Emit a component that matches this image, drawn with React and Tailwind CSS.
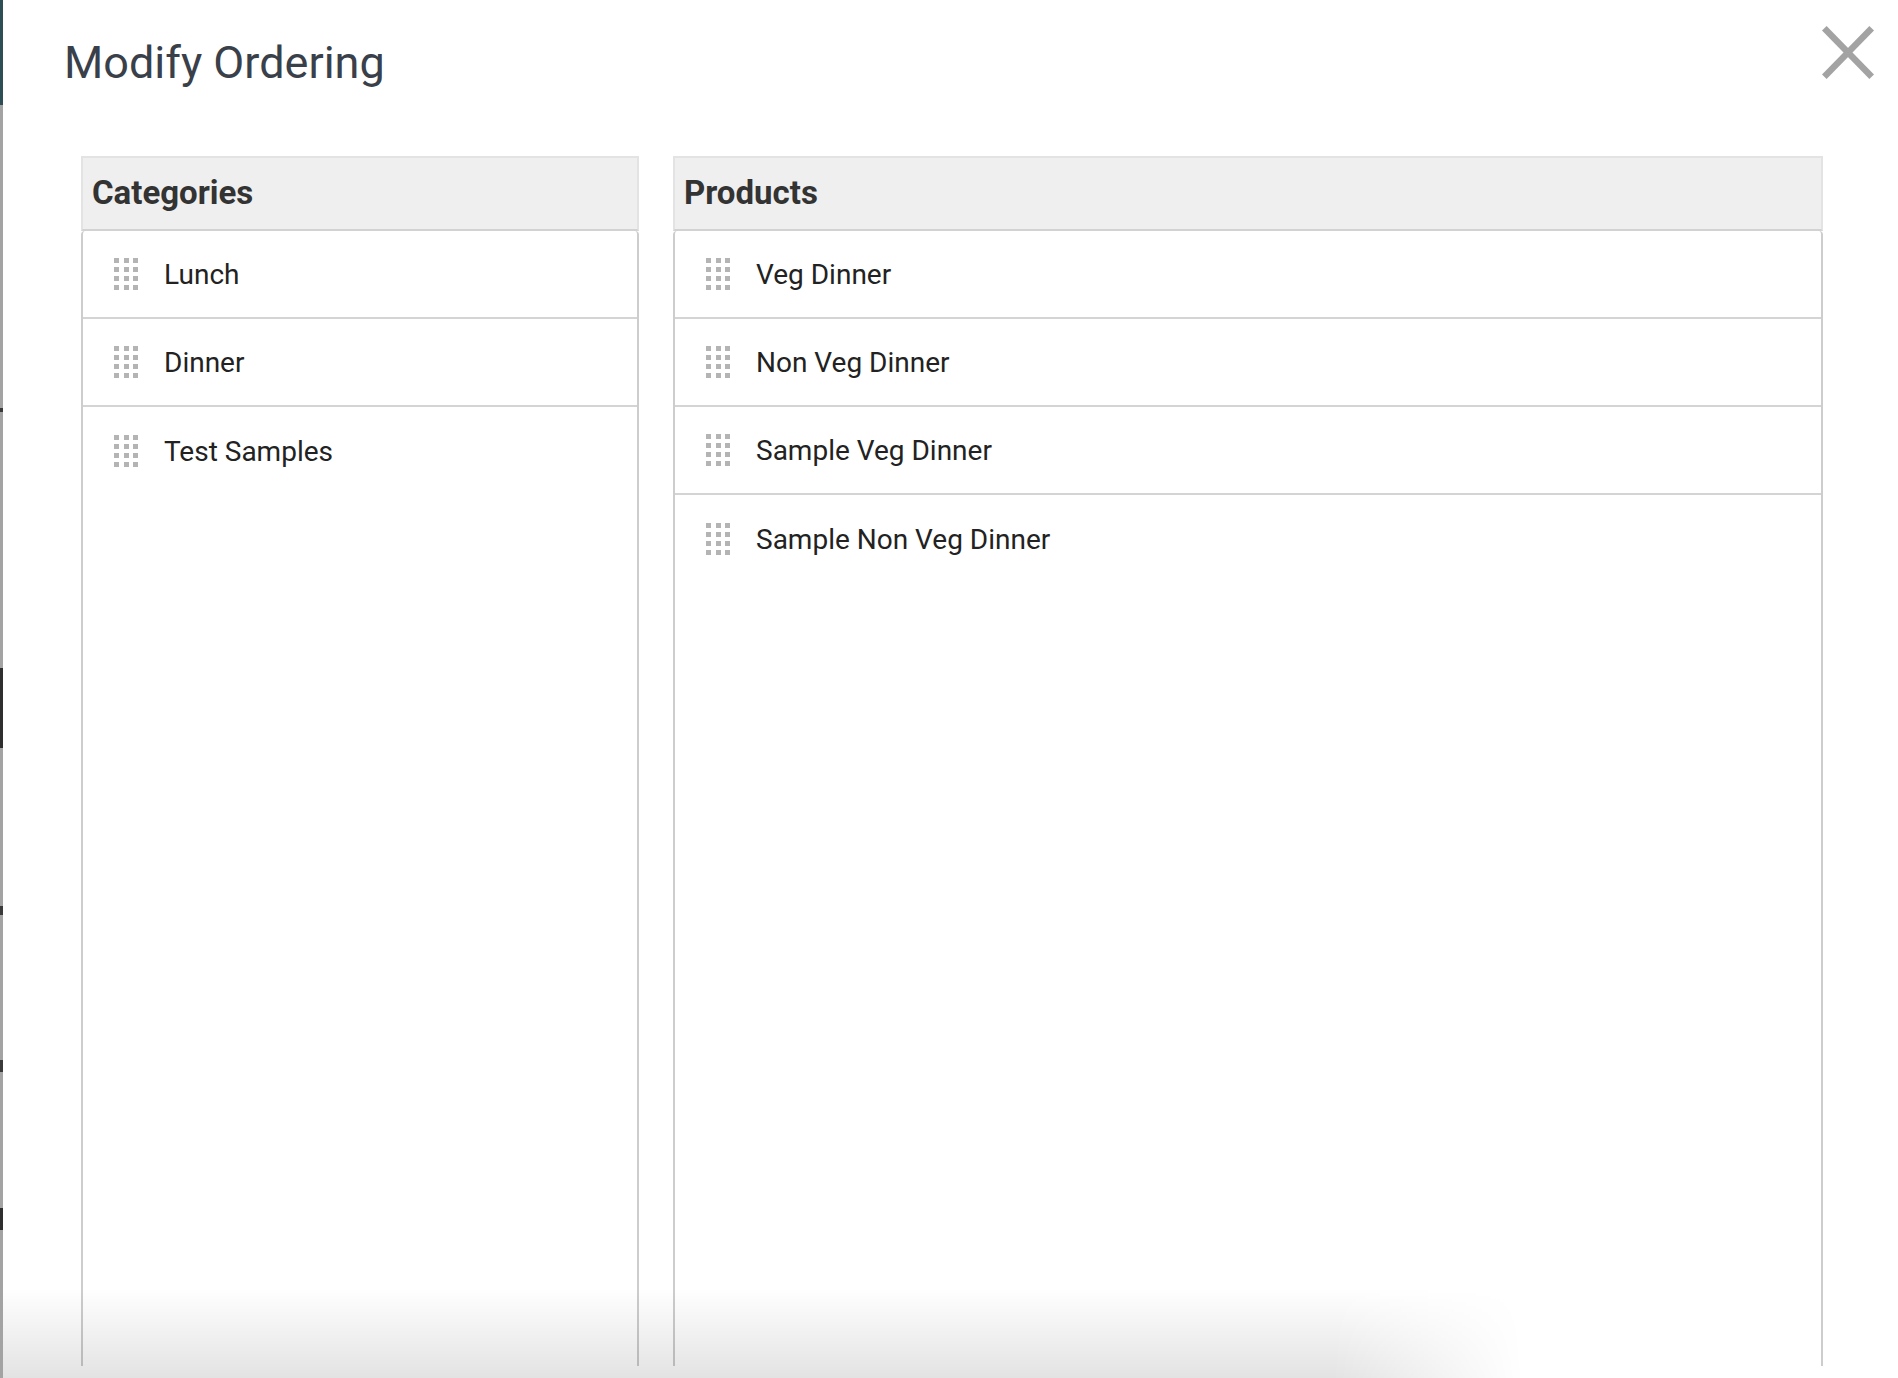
import React from "react";

function Handle() {
  return (
    <div className="grid grid-cols-3 gap-x-[4.5px] gap-y-[4px] w-[24px] shrink-0">
      {Array.from({ length: 12 }).map((_, i) => (
        <div key={i} className="w-[5px] h-[5px] bg-[#b4b4b4]" />
      ))}
    </div>
  );
}

function Panel({ title, items, className }) {
  return (
    <div className={"flex flex-col " + className}>
      <div className="h-[75px] shrink-0 border-2 border-[#e3e3e3] border-b-[#d2d2d2] bg-[#efefef] pl-[9px] pt-[18px]">
        <span className="text-[33px] leading-none font-bold text-[#333333]">{title}</span>
      </div>
      <div className="flex-1 border-x-2 border-[#cdcdcd] rounded-t-[4px]">
        {items.map((it, i) => (
          <div
            key={it}
            className={
              "h-[88px] flex items-center pl-[31px] " +
              (i < items.length - 1 ? "border-b-2 border-[#d4d4d4]" : "")
            }
          >
            <Handle />
            <span className="ml-[26px] mt-[2px] text-[28px] leading-none text-[#222222]">{it}</span>
          </div>
        ))}
      </div>
    </div>
  );
}

export default function App() {
  return (
    <div className="flex w-[1898px] h-[1378px] overflow-hidden bg-white font-['Roboto',sans-serif]">
      <div className="w-[3px] flex flex-col shrink-0">
        <div className="h-[105px] bg-[#2c4e54]" />
        <div className="h-[303px] bg-[#a3a3a3]" />
        <div className="h-[4px] bg-[#3a3a3a]" />
        <div className="h-[256px] bg-[#a3a3a3]" />
        <div className="h-[80px] bg-[#2e2e2e]" />
        <div className="h-[158px] bg-[#a3a3a3]" />
        <div className="h-[9px] bg-[#3a3a3a]" />
        <div className="h-[145px] bg-[#a3a3a3]" />
        <div className="h-[12px] bg-[#3a3a3a]" />
        <div className="h-[136px] bg-[#a3a3a3]" />
        <div className="h-[22px] bg-[#2e2e2e]" />
        <div className="flex-1 bg-[#a3a3a3]" />
      </div>
      <div className="relative flex-1 flex flex-col bg-white">
        <h1 className="pt-[40px] pl-[61px] text-[45px] leading-none font-normal text-[#394049]">
          Modify Ordering
        </h1>
        <button className="absolute top-[26px] right-[24px] w-[52px] h-[53px]" aria-label="Close">
          <svg width="52" height="53" viewBox="0 0 52 53">
            <line x1="2.3" y1="2.3" x2="49.7" y2="50.7" stroke="#a3a3a3" strokeWidth="6.5" />
            <line x1="49.7" y1="2.3" x2="2.3" y2="50.7" stroke="#a3a3a3" strokeWidth="6.5" />
          </svg>
        </button>
        <div className="mt-[71px] pl-[78px] pr-[75px] flex gap-[34px] h-[1210px]">
          <Panel title="Categories" items={["Lunch", "Dinner", "Test Samples"]} className="w-[558px]" />
          <Panel
            title="Products"
            items={["Veg Dinner", "Non Veg Dinner", "Sample Veg Dinner", "Sample Non Veg Dinner"]}
            className="flex-1"
          />
        </div>
        <div className="absolute bottom-0 left-0 right-0 h-[90px] pointer-events-none bg-[linear-gradient(to_bottom,rgba(0,0,0,0),rgba(0,0,0,0.11))] [mask-image:linear-gradient(to_right,black_1330px,transparent_1520px)]" />
      </div>
    </div>
  );
}
